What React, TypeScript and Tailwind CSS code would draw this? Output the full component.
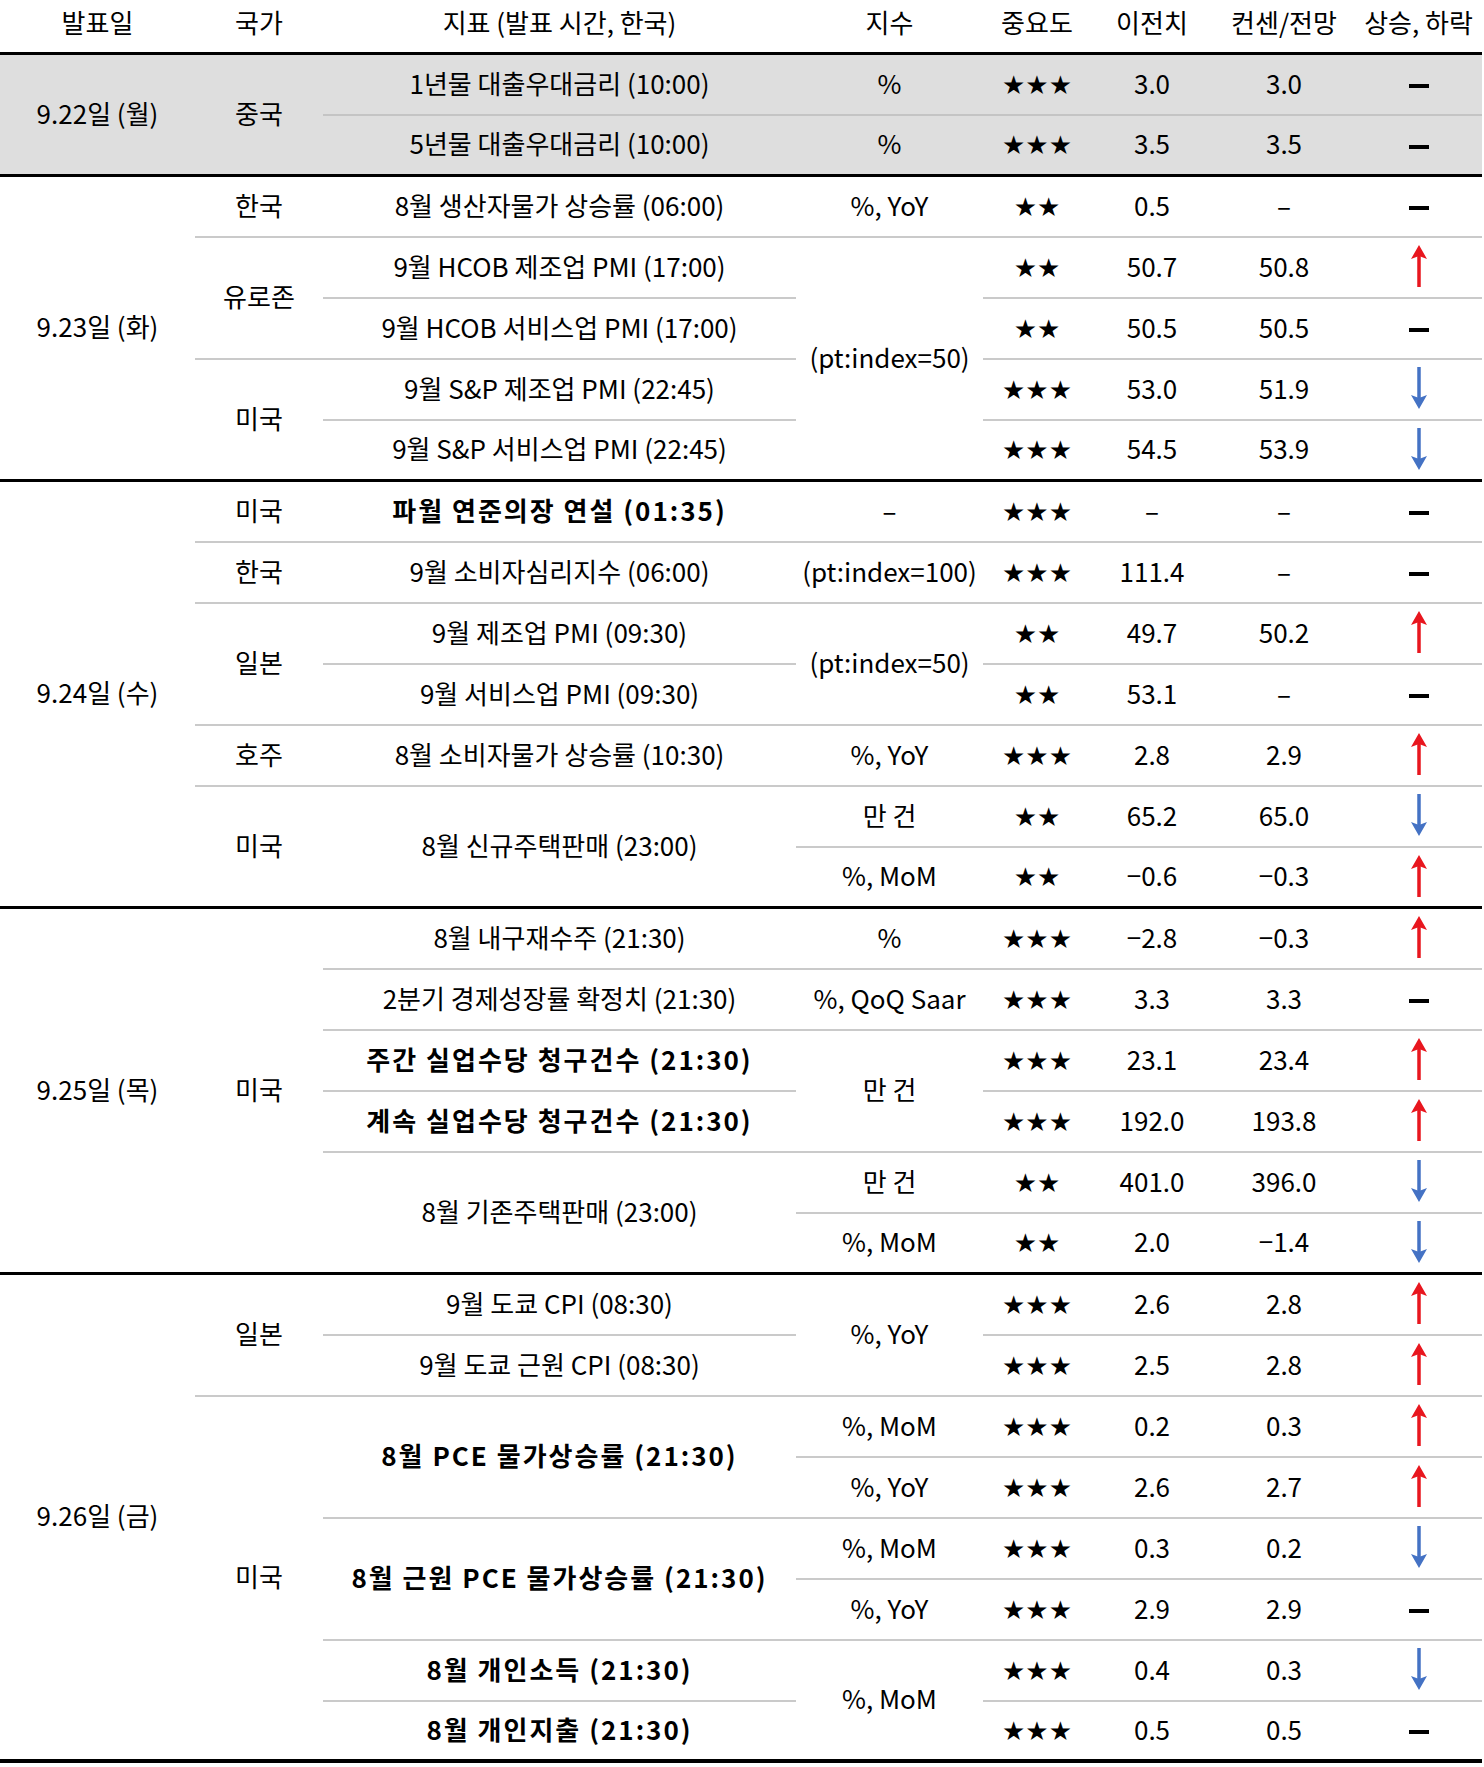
import React from 'react';

type Cell = [React.ReactNode, number?];

type Group = {
    date: string;
    gray?: boolean;
    rows: Cell[][];
};

const groups: Group[] = [
    {
        date: '9.22일 (월)',
        gray: true,
        rows: [
            [['중국', 2], ['1년물 대출우대금리 (10:00)'], ['%'], ['★★★'], ['3.0'], ['3.0'], ['-']],
            [['5년물 대출우대금리 (10:00)'], ['%'], ['★★★'], ['3.5'], ['3.5'], ['-']],
        ],
    },
    {
        date: '9.23일 (화)',
        rows: [
            [['한국'], ['8월 생산자물가 상승률 (06:00)'], ['%, YoY'], ['★★'], ['0.5'], ['–'], ['-']],
            [['유로존', 2], ['9월 HCOB 제조업 PMI (17:00)'], ['(pt:index=50)', 4], ['★★'], ['50.7'], ['50.8'], ['up']],
            [['9월 HCOB 서비스업 PMI (17:00)'], ['★★'], ['50.5'], ['50.5'], ['-']],
            [['미국', 2], ['9월 S&P 제조업 PMI (22:45)'], ['★★★'], ['53.0'], ['51.9'], ['down']],
            [['9월 S&P 서비스업 PMI (22:45)'], ['★★★'], ['54.5'], ['53.9'], ['down']],
        ],
    },
    {
        date: '9.24일 (수)',
        rows: [
            [['미국'], ['**파월 연준의장 연설 (01:35)'], ['–'], ['★★★'], ['–'], ['–'], ['-']],
            [['한국'], ['9월 소비자심리지수 (06:00)'], ['(pt:index=100)'], ['★★★'], ['111.4'], ['–'], ['-']],
            [['일본', 2], ['9월 제조업 PMI (09:30)'], ['(pt:index=50)', 2], ['★★'], ['49.7'], ['50.2'], ['up']],
            [['9월 서비스업 PMI (09:30)'], ['★★'], ['53.1'], ['–'], ['-']],
            [['호주'], ['8월 소비자물가 상승률 (10:30)'], ['%, YoY'], ['★★★'], ['2.8'], ['2.9'], ['up']],
            [['미국', 2], ['8월 신규주택판매 (23:00)', 2], ['만 건'], ['★★'], ['65.2'], ['65.0'], ['down']],
            [['%, MoM'], ['★★'], ['−0.6'], ['−0.3'], ['up']],
        ],
    },
    {
        date: '9.25일 (목)',
        rows: [
            [['미국', 6], ['8월 내구재수주 (21:30)'], ['%'], ['★★★'], ['−2.8'], ['−0.3'], ['up']],
            [['2분기 경제성장률 확정치 (21:30)'], ['%, QoQ Saar'], ['★★★'], ['3.3'], ['3.3'], ['-']],
            [['**주간 실업수당 청구건수 (21:30)'], ['만 건', 2], ['★★★'], ['23.1'], ['23.4'], ['up']],
            [['**계속 실업수당 청구건수 (21:30)'], ['★★★'], ['192.0'], ['193.8'], ['up']],
            [['8월 기존주택판매 (23:00)', 2], ['만 건'], ['★★'], ['401.0'], ['396.0'], ['down']],
            [['%, MoM'], ['★★'], ['2.0'], ['−1.4'], ['down']],
        ],
    },
    {
        date: '9.26일 (금)',
        rows: [
            [['일본', 2], ['9월 도쿄 CPI (08:30)'], ['%, YoY', 2], ['★★★'], ['2.6'], ['2.8'], ['up']],
            [['9월 도쿄 근원 CPI (08:30)'], ['★★★'], ['2.5'], ['2.8'], ['up']],
            [['미국', 6], ['**8월 PCE 물가상승률 (21:30)', 2], ['%, MoM'], ['★★★'], ['0.2'], ['0.3'], ['up']],
            [['%, YoY'], ['★★★'], ['2.6'], ['2.7'], ['up']],
            [['**8월 근원 PCE 물가상승률 (21:30)', 2], ['%, MoM'], ['★★★'], ['0.3'], ['0.2'], ['down']],
            [['%, YoY'], ['★★★'], ['2.9'], ['2.9'], ['-']],
            [['**8월 개인소득 (21:30)'], ['%, MoM', 2], ['★★★'], ['0.4'], ['0.3'], ['down']],
            [['**8월 개인지출 (21:30)'], ['★★★'], ['0.5'], ['0.5'], ['-']],
        ],
    },
];

const headers = ['발표일', '국가', '지표 (발표 시간, 한국)', '지수', '중요도', '이전치', '컨센/전망', '상승, 하락'];
const widths = [195, 128, 473, 187, 108, 122, 142, 127];

function UpArrow() {
    return (
        <svg width="20" height="42" viewBox="0 0 20 42" className="inline-block align-middle">
            <line x1="10" y1="10" x2="10" y2="42" stroke="#e8161e" strokeWidth="3.5" />
            <polygon points="10,0 18,14 10,11 2,14" fill="#e8161e" />
        </svg>
    );
}

function DownArrow() {
    return (
        <svg width="20" height="42" viewBox="0 0 20 42" className="inline-block align-middle">
            <line x1="10" y1="0" x2="10" y2="32" stroke="#4472c4" strokeWidth="3.5" />
            <polygon points="10,42 18,28 10,31 2,28" fill="#4472c4" />
        </svg>
    );
}

function renderContent(v: React.ReactNode) {
    if (v === 'up') return <UpArrow />;
    if (v === 'down') return <DownArrow />;
    if (v === '-') return <span className="inline-block w-[20px] h-[4px] bg-black align-middle" />;
    if (typeof v === 'string' && v.startsWith('★')) {
        return <span className="font-['DejaVu_Sans',sans-serif] text-[26px] leading-none">{v}</span>;
    }
    if (typeof v === 'string' && v.startsWith('**')) {
        return <span className="font-bold tracking-[2px]">{v.slice(2)}</span>;
    }
    return v;
}

export default function App() {
    return (
        <div className="bg-white w-[1484px] min-h-[1767px] font-['Noto_Sans_CJK_KR',sans-serif] text-[26px] text-black">
            <table className="table-fixed w-[1482px] border-separate border-spacing-0">
                <colgroup>
                    {widths.map((w, i) => (
                        <col key={i} style={{ width: w }} />
                    ))}
                </colgroup>
                <thead>
                    <tr className="h-[55px]">
                        {headers.map((h) => (
                            <th key={h} className="font-normal text-center whitespace-nowrap p-0 pb-[10px] border-b-[3px] border-black">
                                {h}
                            </th>
                        ))}
                    </tr>
                </thead>
                <tbody>
                    {groups.map((g, gi) => {
                        const last = g.rows.length - 1;
                        const finalGroup = gi === groups.length - 1;
                        return g.rows.map((row, ri) => (
                            <tr key={`${gi}-${ri}`} className={`h-[61px] ${g.gray ? 'bg-[#dedede]' : ''}`}>
                                {ri === 0 && (
                                    <td
                                        rowSpan={g.rows.length}
                                        className={`text-center whitespace-nowrap p-0 pb-[5px] ${finalGroup ? 'border-b-[4px] border-black' : 'border-b-[3px] border-black'}`}
                                    >
                                        {g.date}
                                    </td>
                                )}
                                {row.map(([v, rs], ci) => {
                                    const span = rs ?? 1;
                                    const atEnd = ri + span - 1 === last;
                                    const border = atEnd
                                        ? finalGroup
                                            ? 'border-b-[4px] border-black'
                                            : 'border-b-[3px] border-black'
                                        : g.gray
                                          ? 'border-b-2 border-[#c4c4c4]'
                                          : 'border-b-2 border-[#cacaca]';
                                    return (
                                        <td
                                            key={ci}
                                            rowSpan={span > 1 ? span : undefined}
                                            className={`text-center align-middle whitespace-nowrap p-0 pb-[5px] ${border}`}
                                        >
                                            {renderContent(v)}
                                        </td>
                                    );
                                })}
                            </tr>
                        ));
                    })}
                </tbody>
            </table>
        </div>
    );
}
